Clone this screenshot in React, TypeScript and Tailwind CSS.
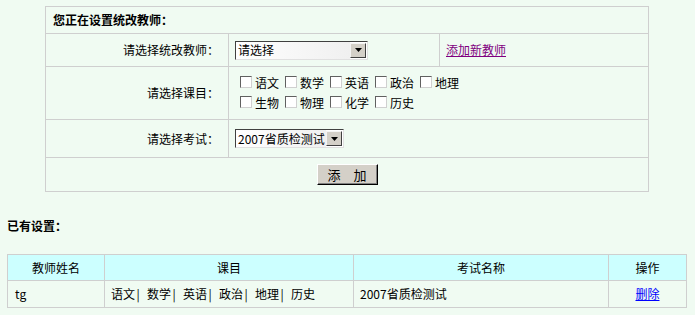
import React from "react";

function Cb() {
  return (
    <span className="inline-block w-[12px] h-[12px] bg-white border border-t-[#606060] border-l-[#606060] border-b-[#d0d0d0] border-r-[#d0d0d0] align-middle mr-[3px] relative top-[-1px]" />
  );
}

function Sel({ w, text }: { w: string; text: string }) {
  return (
    <div className={`${w} h-[19px] flex items-stretch bg-white border border-t-[#404040] border-l-[#404040] border-b-[#e0e0e0] border-r-[#e0e0e0]`}>
      <div className="flex-1 flex items-center pl-[2px] bg-gradient-to-r from-white to-[#f0f0f0] text-[12px] leading-[14px] overflow-hidden whitespace-nowrap">
        {text}
      </div>
      <div className="w-[16px] my-[1px] mr-[1px] bg-[#d4d0c8] border border-t-[#f4f4f4] border-l-[#f4f4f4] border-b-[#404040] border-r-[#404040] flex items-center justify-center">
        <svg width="7" height="4" viewBox="0 0 7 4">
          <path d="M0 0H7L3.5 4Z" fill="#000" />
        </svg>
      </div>
    </div>
  );
}

const subjects1 = ["语文", "数学", "英语", "政治", "地理"];
const subjects2 = ["生物", "物理", "化学", "历史"];
const chosen = ["语文", "数学", "英语", "政治", "地理", "历史"];

export default function App() {
  const td = "border border-[#cfcfcf]";
  return (
    <div className="w-[695px] h-[315px] bg-[#f0fbf2] text-black text-[12px] leading-[14px] font-['SimSun','Noto_Sans_CJK_SC',sans-serif] overflow-hidden pt-[6px]">
      <table className="ml-[45px] w-[604px] border-collapse">
        <tbody>
          <tr className="h-[27px]">
            <td colSpan={3} className={`${td} pl-[7px] font-bold`}>您正在设置统改教师：</td>
          </tr>
          <tr className="h-[33px]">
            <td className={`${td} w-[183px] text-right pr-[9px]`}>请选择统改教师：</td>
            <td className={`${td} w-[211px] pl-[6px]`}>
              <Sel w="w-[133px]" text="请选择" />
            </td>
            <td className={`${td} pl-[6px]`}>
              <a className="text-[#800080] underline">添加新教师</a>
            </td>
          </tr>
          <tr className="h-[53px]">
            <td className={`${td} text-right pr-[9px]`}>请选择课目：</td>
            <td colSpan={2} className={`${td} pl-[11px]`}>
              <div className="flex flex-col gap-[6px]">
                <div className="flex gap-[6px]">
                  {subjects1.map((s) => (
                    <span key={s} className="flex items-center whitespace-nowrap"><Cb />{s}</span>
                  ))}
                </div>
                <div className="flex gap-[6px]">
                  {subjects2.map((s) => (
                    <span key={s} className="flex items-center whitespace-nowrap"><Cb />{s}</span>
                  ))}
                </div>
              </div>
            </td>
          </tr>
          <tr className="h-[38px]">
            <td className={`${td} text-right pr-[9px]`}>请选择考试：</td>
            <td colSpan={2} className={`${td} pl-[6px]`}>
              <Sel w="w-[109px]" text="2007省质检测试" />
            </td>
          </tr>
          <tr className="h-[34px]">
            <td colSpan={3} className={`${td} text-center`}>
              <button className="w-[61px] h-[21px] bg-[#d4d0c8] border border-t-[#ffffff] border-l-[#ffffff] border-b-[#000] border-r-[#000] shadow-[inset_-1px_-1px_0_#808080] text-[13px] leading-[14px]">
                添　加
              </button>
            </td>
          </tr>
        </tbody>
      </table>

      <div className="pl-[7px] mt-[27px] font-bold">已有设置：</div>

      <table className="ml-[7px] mt-[21px] w-[680px] border-collapse">
        <tbody>
          <tr className="h-[26px] bg-[#ccffff]">
            <td className={`${td} w-[97px] text-center`}>教师姓名</td>
            <td className={`${td} w-[249px] text-center`}>课目</td>
            <td className={`${td} w-[255px] text-center`}>考试名称</td>
            <td className={`${td} text-center`}>操作</td>
          </tr>
          <tr className="h-[27px]">
            <td className={`${td} pl-[7px]`}>tg</td>
            <td className={`${td} pl-[6px]`}>
              <span className="flex items-center gap-[6px] whitespace-nowrap">
                {chosen.map((s, i) => (
                  <span key={s} className="flex items-center">
                    {s}
                    {i < chosen.length - 1 && <span className="inline-block w-[6px] text-center">|</span>}
                  </span>
                ))}
              </span>
            </td>
            <td className={`${td} pl-[6px]`}>2007省质检测试</td>
            <td className={`${td} text-center`}>
              <a className="text-[#0000ff] underline">删除</a>
            </td>
          </tr>
        </tbody>
      </table>
    </div>
  );
}
